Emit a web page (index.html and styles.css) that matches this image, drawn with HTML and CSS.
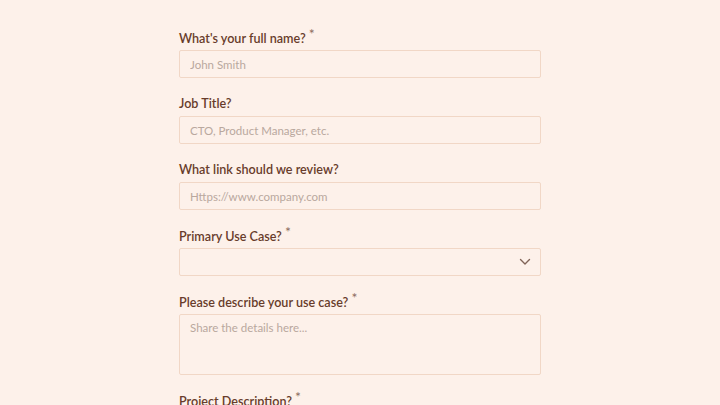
FILE: index.html
```html
<!DOCTYPE html>
<html lang="en">
<head>
<meta charset="UTF-8">
<meta name="viewport" content="width=device-width, initial-scale=1.0">
<title>Review Request</title>
<link rel="stylesheet" href="styles.css">
</head>
<body>
<form class="review-form">
  <div class="field">
    <label class="field-label">What's your full name? <span class="req">*</span></label>
    <input class="field-input" type="text" placeholder="John Smith">
  </div>
  <div class="field">
    <label class="field-label">Job Title?</label>
    <input class="field-input" type="text" placeholder="CTO, Product Manager, etc.">
  </div>
  <div class="field">
    <label class="field-label">What link should we review?</label>
    <input class="field-input" type="text" placeholder="Https://www.company.com">
  </div>
  <div class="field">
    <label class="field-label">Primary Use Case? <span class="req">*</span></label>
    <div class="select-box">
      <svg class="chevron" width="12" height="8" viewBox="0 0 12 8"><path d="M1.5 1.5 L6 6 L10.5 1.5" fill="none" stroke="#806458" stroke-width="1.4" stroke-linecap="round" stroke-linejoin="round"/></svg>
    </div>
  </div>
  <div class="field">
    <label class="field-label">Please describe your use case? <span class="req">*</span></label>
    <textarea class="field-area" placeholder="Share the details here..."></textarea>
  </div>
  <div class="field">
    <label class="field-label">Project Description? <span class="req">*</span></label>
  </div>
</form>
</body>
</html>
```

FILE: styles.css
```css
body {
  margin: 0;
  background-color: #fdf1ea;
  color: #683c2b;
  font-family: 'Lato', sans-serif;
}

.review-form {
  width: 362px;
  margin: 0 auto;
  padding-top: 28px;
}

.field {
  margin-bottom: 16px;
}

.field-label {
  display: block;
  height: 20px;
  line-height: 20px;
  margin-bottom: 2px;
  font-size: 12.6px;
  font-weight: 600;
}

.req {
  position: relative;
  top: -4px;
  font-size: 14px;
  font-weight: 400;
  color: #8d6e60;
}

.field-input,
.select-box,
.field-area {
  display: block;
  box-sizing: border-box;
  width: 100%;
  margin: 0;
  border: 1px solid #f1d7c6;
  border-radius: 2px;
  background-color: #fdf1ea;
  font-family: 'Lato', sans-serif;
  font-size: 11.5px;
  color: #683c2b;
  outline: none;
}

.field-input {
  height: 28px;
  padding: 0 10px;
}

.select-box {
  height: 28px;
  display: flex;
  justify-content: flex-end;
  align-items: center;
  padding-right: 9px;
}

.field-area {
  height: 61px;
  padding: 6px 10px;
  resize: none;
}

.field-input::placeholder,
.field-area::placeholder {
  color: #b9a89e;
}
```
